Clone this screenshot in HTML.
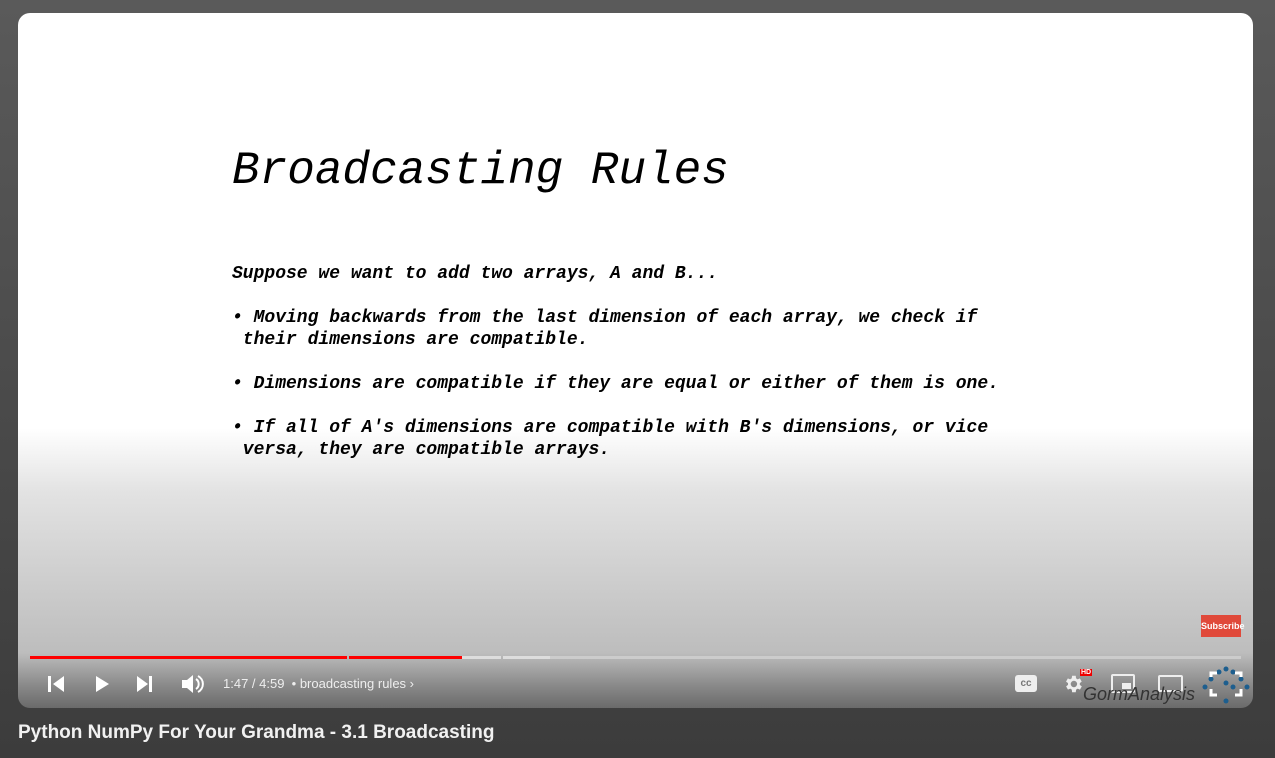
<!DOCTYPE html>
<html><head><style>
body{margin:0;width:1275px;height:758px;overflow:hidden;background:linear-gradient(#5a5a5a,#3c3c3c);font-family:"Liberation Sans",sans-serif;position:relative}
#v{position:absolute;left:18px;top:13px;width:1235px;height:695px;border-radius:12px;overflow:hidden;background:linear-gradient(#fff 0,#fff 415px,#e2e2e2 480px,#c6c6c6 600px,#bdbdbd 640px,#8a8a8a 672px,#6a6a6a 695px)}
.m{position:absolute;font-family:"Liberation Mono",monospace;font-style:italic;color:#000;white-space:pre}
#t{left:214px;top:132px;font-size:46px}
.b{font-size:18px;line-height:22px;font-weight:bold}
.bar{position:absolute;top:643px;height:3px}
.w{position:absolute;color:#eee;font-size:13px}
svg{position:absolute}
</style></head><body>
<div id="v">
<div class="m" id="t">Broadcasting Rules</div>
<div class="m b" style="left:214px;top:250px">Suppose we want to add two arrays, A and B...

• Moving backwards from the last dimension of each array, we check if
 their dimensions are compatible.

• Dimensions are compatible if they are equal or either of them is one.

• If all of A's dimensions are compatible with B's dimensions, or vice
 versa, they are compatible arrays.</div>
<div style="position:absolute;left:1183px;top:602px;width:40px;height:22px;background:#e0493a;color:#fff;font-size:9px;font-weight:bold;text-align:center;line-height:22px">Subscribe</div>
<div class="bar" style="left:12px;width:317px;background:#f00"></div>
<div class="bar" style="left:331px;width:113px;background:#f00"></div>
<div class="bar" style="left:444px;width:39px;background:#ddd"></div>
<div class="bar" style="left:485px;width:47px;background:#ddd"></div>
<div class="bar" style="left:532px;width:691px;background:#ccc"></div>
<svg style="left:28px;top:661px" width="20" height="20"><path d="M2 2h3v16H2zM18 2v16L7 10z" fill="#fff"/></svg>
<svg style="left:74px;top:661px" width="20" height="20"><path d="M4 2v16l13-8z" fill="#fff"/></svg>
<svg style="left:116px;top:661px" width="20" height="20"><path d="M3 2v16l11-8zM15 2h3v16h-3z" fill="#fff"/></svg>
<svg style="left:162px;top:660px" width="24" height="22"><path d="M2 7h5l6-5v18l-6-5H2z" fill="#fff"/><path d="M16 6a6 6 0 010 10M18 3a9 9 0 010 16" stroke="#fff" stroke-width="2" fill="none"/></svg>
<div class="w" style="left:205px;top:663px">1:47 / 4:59 &nbsp;• broadcasting rules ›</div>
<div style="position:absolute;left:997px;top:662px;width:22px;height:17px;background:#eee;border-radius:3px;font-size:10px;font-weight:bold;color:#777;text-align:center;line-height:17px">cc</div>
<svg style="left:1044px;top:660px" width="22" height="22" viewBox="0 0 24 24"><path fill="#eee" d="M19.4 13a7.5 7.5 0 000-2l2.1-1.6-2-3.5-2.5 1a7 7 0 00-1.7-1L15 3h-4l-.4 2.9a7 7 0 00-1.7 1l-2.5-1-2 3.5L6.6 11a7.5 7.5 0 000 2l-2.1 1.6 2 3.5 2.5-1a7 7 0 001.7 1L11 21h4l.4-2.9a7 7 0 001.7-1l2.5 1 2-3.5zM13 15.5a3.5 3.5 0 110-7 3.5 3.5 0 010 7z"/></svg>
<div style="position:absolute;left:1062px;top:656px;background:#e00;color:#fff;font-size:7px;font-weight:bold;padding:0 1px">HD</div>
<div style="position:absolute;left:1093px;top:661px;width:20px;height:15px;border:2px solid #eee;border-radius:2px"><div style="position:absolute;right:2px;bottom:2px;width:9px;height:6px;background:#eee"></div></div>
<div style="position:absolute;left:1140px;top:662px;width:21px;height:13px;border:2px solid #eee;border-radius:2px"></div>
<div style="position:absolute;left:1065px;top:671px;font-size:18px;font-style:italic;color:#333">GormAnalysis</div>
<svg style="left:1183px;top:652px" width="50" height="40"><g fill="#1d5e8e"><circle cx="25" cy="4" r="2.5"/><circle cx="18" cy="7" r="2.5"/><circle cx="32" cy="7" r="2.5"/><circle cx="10" cy="14" r="2.5"/><circle cx="40" cy="14" r="2.5"/><circle cx="4" cy="22" r="2.5"/><circle cx="46" cy="22" r="2.5"/><circle cx="25" cy="18" r="2.5"/><circle cx="32" cy="22" r="2.5"/><circle cx="25" cy="36" r="2.5"/></g><path d="M10 12v-4h6M34 8h6v4M10 24v6h6M34 30h6v-6" stroke="#fff" stroke-width="3" fill="none"/></svg>
</div>
<div style="position:absolute;left:18px;top:722px;color:#f1f1f1;font-size:19px;font-weight:bold">Python NumPy For Your Grandma - 3.1 Broadcasting</div>
</body></html>
